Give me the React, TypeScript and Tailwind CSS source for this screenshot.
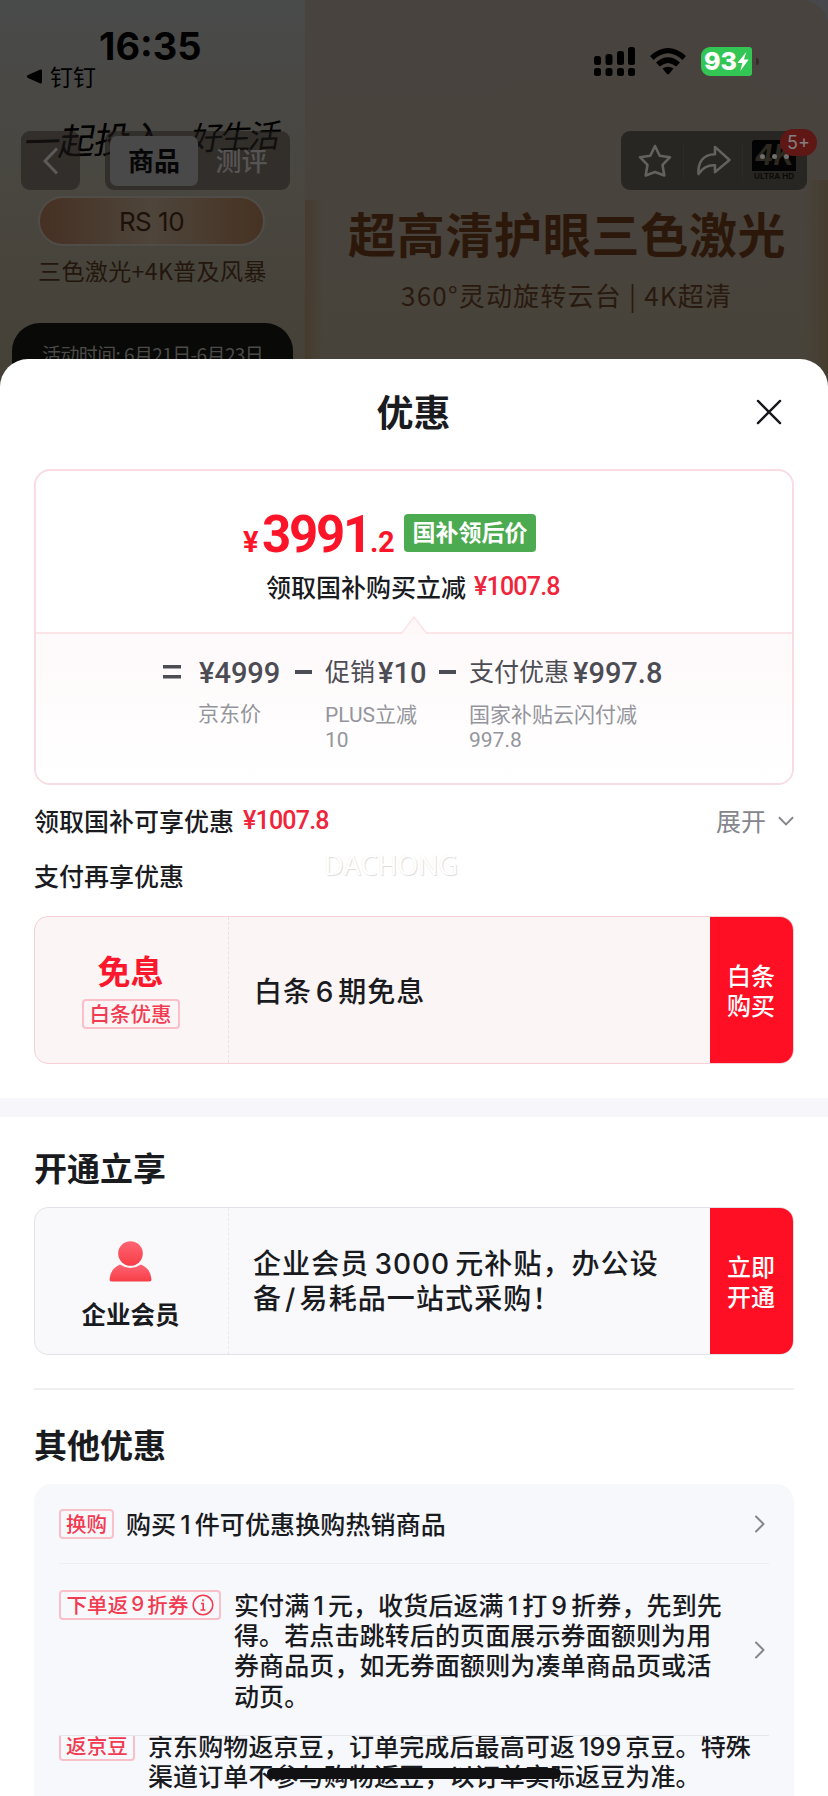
import type { ReactNode } from "react";

function Num({ children, className = "" }: { children: ReactNode; className?: string }) {
  return <span className={`font-['Inter','Noto_Sans_CJK_SC',sans-serif] leading-none ${className}`}>{children}</span>;
}

function Chevron() {
  return (
    <svg className="h-[18px] w-[12px] shrink-0" viewBox="0 0 12 18" fill="none" stroke="#85868c" strokeWidth="2" strokeLinecap="round" strokeLinejoin="round">
      <path d="M2 1.5 9.5 9 2 16.5" />
    </svg>
  );
}

function Banner() {
  return (
    <div className="absolute inset-0 overflow-hidden bg-[#48484c]">
      <div className="absolute inset-0 flex overflow-hidden rounded-tr-[26px]">
        <div className="relative h-full w-[305px] shrink-0 bg-linear-to-b from-[#494a4a] via-[#49463f] to-[#444036]">
          <div className="absolute top-[114px] left-[25px] origin-left -rotate-2 -skew-x-12 text-[36px] leading-[52px] tracking-[-1px] whitespace-nowrap text-black">
            一起投入<span className="ml-[27px] text-[32px] tracking-[-3px]">好生活</span>
          </div>
          <div className="absolute top-[196px] left-[38px] flex h-[50px] w-[227px] items-center justify-center rounded-full border-2 border-[#504d48] bg-linear-to-r from-[#463023] via-[#4e453b] to-[#463222] font-['Inter',sans-serif] text-[26px] tracking-[-0.5px] text-[#1c110a]">
            RS 10
          </div>
          <div className="absolute top-[253px] left-[38px] text-[23px] leading-[34px] tracking-[0.4px] whitespace-nowrap text-[#22160d]">三色激光+4K普及风暴</div>
          <div className="absolute top-[323px] left-[12px] h-[60px] w-[281px] rounded-t-[28px] bg-[#090908] pt-[16px] pl-[30px] text-[19px] leading-[30px] tracking-[-0.6px] whitespace-nowrap text-[#4c4b49]">
            活动时间: 6月21日-6月23日
          </div>
        </div>
        <div className="relative h-full flex-1 bg-linear-to-b from-[#49433f] via-[#48433d] to-[#484339]">
          <div className="absolute right-0 bottom-0 h-[220px] w-[24px] bg-linear-to-r from-transparent to-[#453826]/60" />
          <div className="absolute bottom-0 left-0 h-[200px] w-[18px] bg-linear-to-r from-[#453827]/70 to-transparent" />
          <div className="absolute top-[197px] left-[43px] text-[48px] leading-[70px] font-bold tracking-[0.7px] whitespace-nowrap text-[#2c180a]">超高清护眼三色激光</div>
          <div className="absolute top-[276px] left-[96px] text-[26px] leading-[38px] tracking-[1.2px] whitespace-nowrap text-[#291a0f]">360°灵动旋转云台 | 4K超清</div>
        </div>
      </div>
    </div>
  );
}

function StatusBar() {
  return (
    <div className="relative flex h-[131px] justify-between text-black">
      <div className="flex flex-col pt-[26px]">
        <div className="pl-[99px] font-['Inter',sans-serif] text-[38px] leading-[40px] font-bold">16:35</div>
        <div className="-mt-[2px] flex items-center gap-[8px] pl-[26px] text-[23px] leading-[24px]">
          <svg className="h-[15px] w-[16px]" viewBox="0 0 16 15"><path d="M1.5 6.2 13.8.8Q16 0 16 2v11q0 2-2.2 1.2L1.5 8.8Q0 7.5 1.5 6.2Z" /></svg>
          钉钉
        </div>
      </div>
      <div className="flex items-start pt-[47px] pr-[69px]">
        <svg className="h-[29px] w-[42px]" viewBox="0 0 42 29">
          <rect x="0" y="9" width="7" height="9" rx="2.5" />
          <rect x="11.5" y="7" width="7" height="11" rx="2.5" />
          <rect x="23" y="4" width="7" height="14" rx="2.5" />
          <rect x="34" y="0" width="7" height="18" rx="2.5" />
          <rect x="0" y="21" width="7" height="8" rx="2.5" />
          <rect x="11.5" y="21" width="7" height="8" rx="2.5" />
          <rect x="23" y="21" width="7" height="8" rx="2.5" />
          <rect x="34" y="21" width="7" height="8" rx="2.5" />
        </svg>
        <svg className="mt-[1px] ml-[14px] h-[27px] w-[36px]" viewBox="0 0 36 27">
          <path d="M0 8Q18-8 36 8l-3.6 3.9Q18-1.2 3.6 11.900Z" />
          <path d="M6 14.500Q18 4 30 14.500l-3.800 4Q18 11.500 9.800 18.500Z" />
          <path d="M12.500 20.600Q18 16.800 23.500 20.600L19.200 25.700Q18 26.800 16.800 25.700Z" />
        </svg>
        <div className="ml-[15px] flex h-[29px] w-[51px] items-center justify-center rounded-l-[9px] rounded-r-[3px] bg-[#34c655] font-['Inter',sans-serif] text-[25px] leading-none font-extrabold text-white">
          <span>93</span>
          <svg className="h-[19px] w-[12px]" viewBox="0 0 12 20" fill="white"><path d="M9.500 0 0 11.500h5.200L3.200 20 12 8H7Z" /></svg>
        </div>
        <div className="mt-[11px] ml-[4px] h-[7px] w-[3px] rounded-r-full bg-[#302e2c]" />
      </div>
    </div>
  );
}

function NavBar() {
  return (
    <div className="relative flex items-center pr-[21px] pl-[21px]">
      <button className="flex h-[59px] w-[59px] items-center justify-center rounded-[9px] bg-[#1f1c19]/55">
        <svg className="h-[28px] w-[16px]" viewBox="0 0 16 28" fill="none" stroke="#5c5b5a" strokeWidth="3"><path d="M14 1.500 2 14l12 12.500" /></svg>
      </button>
      <div className="ml-[25px] flex h-[59px] w-[185px] items-center rounded-[9px] bg-[#1f1c19]/55 p-[5px]">
        <div className="flex h-[50px] w-[88px] items-center justify-center rounded-[7px] bg-[#4a4949] pb-[3px] text-[26px] font-bold text-[#060606]">商品</div>
        <div className="flex flex-1 items-center justify-center pb-[2px] text-[26px] font-medium text-[#565554]">测评</div>
      </div>
      <div className="relative ml-auto flex h-[59px] w-[186px] items-center rounded-[9px] bg-[#282622]">
        <svg className="ml-[17px] h-[34px] w-[34px]" viewBox="0 0 34 34" fill="none" stroke="#636261" strokeWidth="2.600" strokeLinejoin="round">
          <path d="M17 2 21.700 11.700 32 13.200 24.500 20.800 26.300 31.500 17 28 7.700 31.500 9.500 20.800 2 13.200 12.300 11.700Z" />
        </svg>
        <div className="ml-[11px] h-[34px] w-px bg-[#2d2b28]" />
        <svg className="ml-[12px] h-[31px] w-[36px]" viewBox="0 0 36 32" fill="none" stroke="#636261" strokeWidth="2.600" strokeLinejoin="round">
          <path d="M19 2 34 15.500 19 28v-7C11 20.500 6 24 2 30 1 18 7 9.500 19 9.500Z" />
        </svg>
        <div className="ml-[10px] h-[34px] w-px bg-[#2d2b28]" />
        <div className="ml-[9px] flex w-[44px] flex-col items-center">
          <div className="relative flex h-[31px] w-[44px] items-center justify-center rounded-t-[3px] bg-[#030303] font-['Inter',sans-serif] text-[28px] leading-none font-bold text-[#2d2920] italic">
            4K
            <div className="absolute inset-0 flex items-center justify-center gap-[7px] pt-[3px]">
              <i className="size-[5px] rounded-full bg-[#706f6d]" />
              <i className="size-[5px] rounded-full bg-[#706f6d]" />
              <i className="size-[5px] rounded-full bg-[#706f6d]" />
            </div>
          </div>
          <div className="font-['Inter',sans-serif] text-[8px] leading-[11px] font-bold whitespace-nowrap text-[#0c0a06]">ULTRA HD</div>
        </div>
        <div className="absolute -top-[2px] -right-[10px] flex h-[27px] w-[37px] items-center justify-center rounded-full bg-[#5e1715] font-['Inter',sans-serif] text-[18px] text-[#85807f]">5+</div>
      </div>
    </div>
  );
}

function Money({ children }: { children: ReactNode }) {
  return <span className="font-['Roboto','Noto_Sans_CJK_SC',sans-serif] text-[25px] font-medium tracking-[-0.800px] text-[#f0243a]">{children}</span>;
}

function PriceCard() {
  return (
    <div className="mx-[34px] h-[316px] overflow-hidden rounded-[16px] border-2 border-[#f8dce2]">
      <div className="flex h-[161px] flex-col">
        <div className="mt-[44px] flex h-[42px] items-end pl-[207px] font-['Roboto',sans-serif] leading-none font-bold text-[#fc1428]">
          <span className="w-[19px] text-[29px] leading-[30px]">¥</span>
          <span className="w-[108px] text-[51px] leading-[44px] tracking-[-2.300px]">3991</span>
          <span className="w-[34px] text-[29px] leading-[30px] tracking-[-0.500px]">.2</span>
          <span className="mb-[5px] flex h-[38px] w-[132px] items-center justify-center rounded-[4px] bg-[#4caa50] pb-[3px] font-['Noto_Sans_CJK_SC',sans-serif] text-[23px] text-white">国补领后价</span>
        </div>
        <div className="mt-[12px] flex h-[36px] items-center gap-[8px] pl-[230px] text-[25px] font-medium">
          <span>领取国补购买立减</span>
          <Money>¥1007.8</Money>
        </div>
        <svg className="mt-auto -mb-[2px] h-[18px] w-[28px] self-center" viewBox="0 0 28 18" fill="#fff8f9" stroke="#fbe3e8" strokeWidth="1.500"><path d="M1 18 14 1 27 18" /></svg>
      </div>
      <div className="h-[151px] border-t-2 border-[#fbe5e9] bg-linear-to-b from-[#fef9fa] to-white">
        <div className="flex pt-[20px] pl-[127px] text-[25px] leading-[36px] text-[#4c4d54]">
          <svg className="mt-[11px] mr-[18px] h-[14px] w-[18px]" viewBox="0 0 18 14" fill="#4c4d54"><path d="M0 0h18v3.500H0zM0 10h18v3.500H0z" /></svg>
          <div className="w-[96px]">
            <Eq>¥4999</Eq>
            <p className="mt-[8px] -ml-px text-[21px] leading-[25px] text-[#94959c]">京东价</p>
          </div>
          <Minus />
          <div className="w-[114px]">
            <div className="flex"><span className="-mt-[2px] w-[53px]">促销</span><Eq>¥10</Eq></div>
            <p className="mt-[11px] font-['Roboto','Noto_Sans_CJK_SC',sans-serif] text-[21px] leading-[25px] text-[#94959c]">PLUS立减<br />10</p>
          </div>
          <Minus />
          <div>
            <div className="flex"><span className="-mt-[2px] w-[104px]">支付优惠</span><Eq>¥997.8</Eq></div>
            <p className="mt-[11px] font-['Roboto','Noto_Sans_CJK_SC',sans-serif] text-[21px] leading-[25px] text-[#94959c]">国家补贴云闪付减<br />997.8</p>
          </div>
        </div>
      </div>
    </div>
  );
}

function Eq({ children }: { children: ReactNode }) {
  return <span className="block font-['Roboto',sans-serif] text-[29px] leading-[38px] font-medium">{children}</span>;
}

function Minus() {
  return <span className="mt-[16px] mr-[13px] h-[4px] w-[17px] shrink-0 bg-[#4c4d54]" />;
}

function Coupon({ pink, left, children, action }: { pink?: boolean; left: ReactNode; children: ReactNode; action: [string, string] }) {
  return (
    <div className={`mx-[34px] flex h-[148px] overflow-hidden rounded-[14px] border ${pink ? "border-[#f6cfd7] bg-[#fcf5f6]" : "border-[#e2e3e8] bg-[#f9f9fc]"}`}>
      <div className={`flex w-[194px] shrink-0 flex-col items-center border-r border-dashed pr-[2px] ${pink ? "border-[#f3dde1]" : "border-[#e9e9ee]"}`}>{left}</div>
      <div className="flex flex-1 items-center pl-[25px] text-[28px] leading-[35px] font-medium tracking-[0.900px] whitespace-nowrap">
        <div>{children}</div>
      </div>
      <div className="-m-px flex w-[84px] shrink-0 flex-col items-center justify-center bg-[#fe0f24] pr-[2px] text-[24px] leading-[30px] font-medium text-white">
        <span>{action[0]}</span>
        <span>{action[1]}</span>
      </div>
    </div>
  );
}

function Tag({ children, className }: { children: ReactNode; className: string }) {
  return <span className={`flex h-[30px] shrink-0 items-center justify-center rounded-[4px] border-2 border-[#fac0ca] pb-[1px] text-[20.500px] leading-none font-medium whitespace-nowrap text-[#f23a50] ${className}`}>{children}</span>;
}

export default function App() {
  return (
    <div className="relative h-[1796px] w-[828px] overflow-hidden bg-white font-['Noto_Sans_CJK_SC',sans-serif] text-[#1a1b1f]">
      <header className="relative h-[359px]">
        <div className="absolute inset-x-0 top-0 h-[400px]"><Banner /></div>
        <StatusBar />
        <NavBar />
      </header>

      <section className="relative h-[1437px] overflow-hidden rounded-t-[28px] bg-white">
        <div className="flex h-[110px] items-center justify-center pb-[7px]">
          <h1 className="w-[75px] text-[37px] leading-[54px] font-bold whitespace-nowrap">优惠</h1>
          <svg className="absolute top-[40px] right-[46px] h-[26px] w-[26px]" viewBox="0 0 27 26" fill="none" stroke="#17181c" strokeWidth="2.400" strokeLinecap="round"><path d="M2 1.500 25 24.500M25 1.500 2 24.500" /></svg>
        </div>

        <PriceCard />

        <div className="flex h-[72px] items-center gap-[9px] px-[34px] text-[25px] font-medium">
          <span>领取国补可享优惠</span>
          <Money>¥1007.8</Money>
          <span className="mr-[3px] ml-auto font-normal text-[#85868c]">展开</span>
          <svg className="h-[10px] w-[16px]" viewBox="0 0 17 10" fill="none" stroke="#85868c" strokeWidth="2"><path d="M1 1 8.500 8.500 16 1" /></svg>
        </div>
        <div className="flex h-[59px] items-center px-[34px] pb-[22px] text-[25px] font-medium">
          <span>支付再享优惠</span>
          <span className="mb-[21px] ml-[140px] font-['Open_Sans',sans-serif] text-[27px] font-normal tracking-[-0.100px] text-white [text-shadow:1px_1px_1px_#dcdcdc,-0.500px_-0.500px_0_#f3f3f3]">DACHONG</span>
        </div>

        <Coupon
          pink
          action={["白条", "购买"]}
          left={
            <>
              <b className="mt-[29px] mb-[5px] text-[33px] leading-[48px] text-[#fb182d]">免息</b>
              <Tag className="w-[98px]">白条优惠</Tag>
            </>
          }
        >
          白条<Num className="mx-[4px]">6</Num>期免息
        </Coupon>

        <div className="mt-[34px] h-[19px] bg-[#f7f7fb]" />

        <h2 className="mt-[24px] h-[66px] px-[34px] pt-[1px] text-[33px] leading-[50px] font-bold">开通立享</h2>

        <Coupon
          action={["立即", "开通"]}
          left={
            <>
              <svg className="mt-[33px] h-[41px] w-[43px]" viewBox="0 0 43 41">
                <defs>
                  <linearGradient id="member" x1="0" y1="0" x2="0" y2="1">
                    <stop offset="0" stopColor="#ff6573" />
                    <stop offset="1" stopColor="#f73d47" />
                  </linearGradient>
                </defs>
                <g fill="url(#member)">
                  <circle cx="21.500" cy="12.500" r="12.300" />
                  <path d="M11 23.500Q21.500 30.500 32 23.500 42 28 42.500 38.500 42.500 40.500 40.500 40.500H2.500Q.5 40.500.5 38.500 1 28 11 23.500Z" />
                </g>
              </svg>
              <b className="mt-[14px] text-[24.500px] leading-[36px]">企业会员</b>
            </>
          }
        >
          <div className="-mt-[2px] -ml-px tracking-[1.100px]">
            企业会员<Num className="mx-[5px] tracking-[1px]">3000</Num>元补贴，办公设<br />
            备<Num className="mx-[3px]">/</Num>易耗品一站式采购！
          </div>
        </Coupon>

        <div className="mx-[34px] mt-[33px] h-[2px] bg-[#efeff2]" />
        <h2 className="mt-[29px] h-[65px] px-[34px] text-[33px] leading-[50px] font-bold">其他优惠</h2>

        <div className="mx-[34px] h-[332px] rounded-t-[18px] bg-[#f7f8fc] px-[25px] text-[25px] leading-[30px] font-medium tracking-[0.120px] whitespace-nowrap">
          <div className="flex h-[79px] items-start pt-[25px]">
            <Tag className="w-[55px]">换购</Tag>
            <p className="-mt-px ml-[12px] flex-1">购买<Num className="mx-[4px]">1</Num>件可优惠换购热销商品</p>
            <div className="mt-[6px] mr-[3px]"><Chevron /></div>
          </div>
          <div className="flex h-[172px] border-t border-[#eeeff3] pt-[26px]">
            <Tag className="w-[162px]">
              下单返<Num className="mx-[3px]">9</Num>折券
              <svg className="ml-[3px] h-[22px] w-[22px]" viewBox="0 0 22 22" fill="none" stroke="#f23a50" strokeWidth="1.600"><circle cx="11" cy="11" r="9.800" /><path d="M9 9.500h2.200V16M8.500 16h5M11 5.300v2" /></svg>
            </Tag>
            <p className="-mt-px ml-[13px] flex-1 leading-[30.200px]">
              实付满<Num className="mx-[4px]">1</Num>元，收货后返满<Num className="mx-[4px]">1</Num>打<Num className="mx-[4px]">9</Num>折券，先到先<br />
              得。若点击跳转后的页面展示券面额则为用<br />
              券商品页，如无券面额则为凑单商品页或活<br />
              动页。
            </p>
            <div className="mt-[51px] mr-[3px]"><Chevron /></div>
          </div>
          <div className="flex h-[61px] overflow-hidden border-t border-[#e6e7eb]">
            <Tag className="-mt-[5px] w-[76px]">返京豆</Tag>
            <p className="-mt-[6px] ml-[13px] leading-[30.200px]">
              京东购物返京豆，订单完成后最高可返<Num className="mx-[4px]">199</Num>京豆。特殊<br />
              渠道订单不参与购物返豆，以订单实际返豆为准。
            </p>
          </div>
        </div>
        <div className="absolute bottom-[17px] left-[267px] h-[11px] w-[294px] rounded-full bg-[#111113]" />
      </section>
    </div>
  );
}
